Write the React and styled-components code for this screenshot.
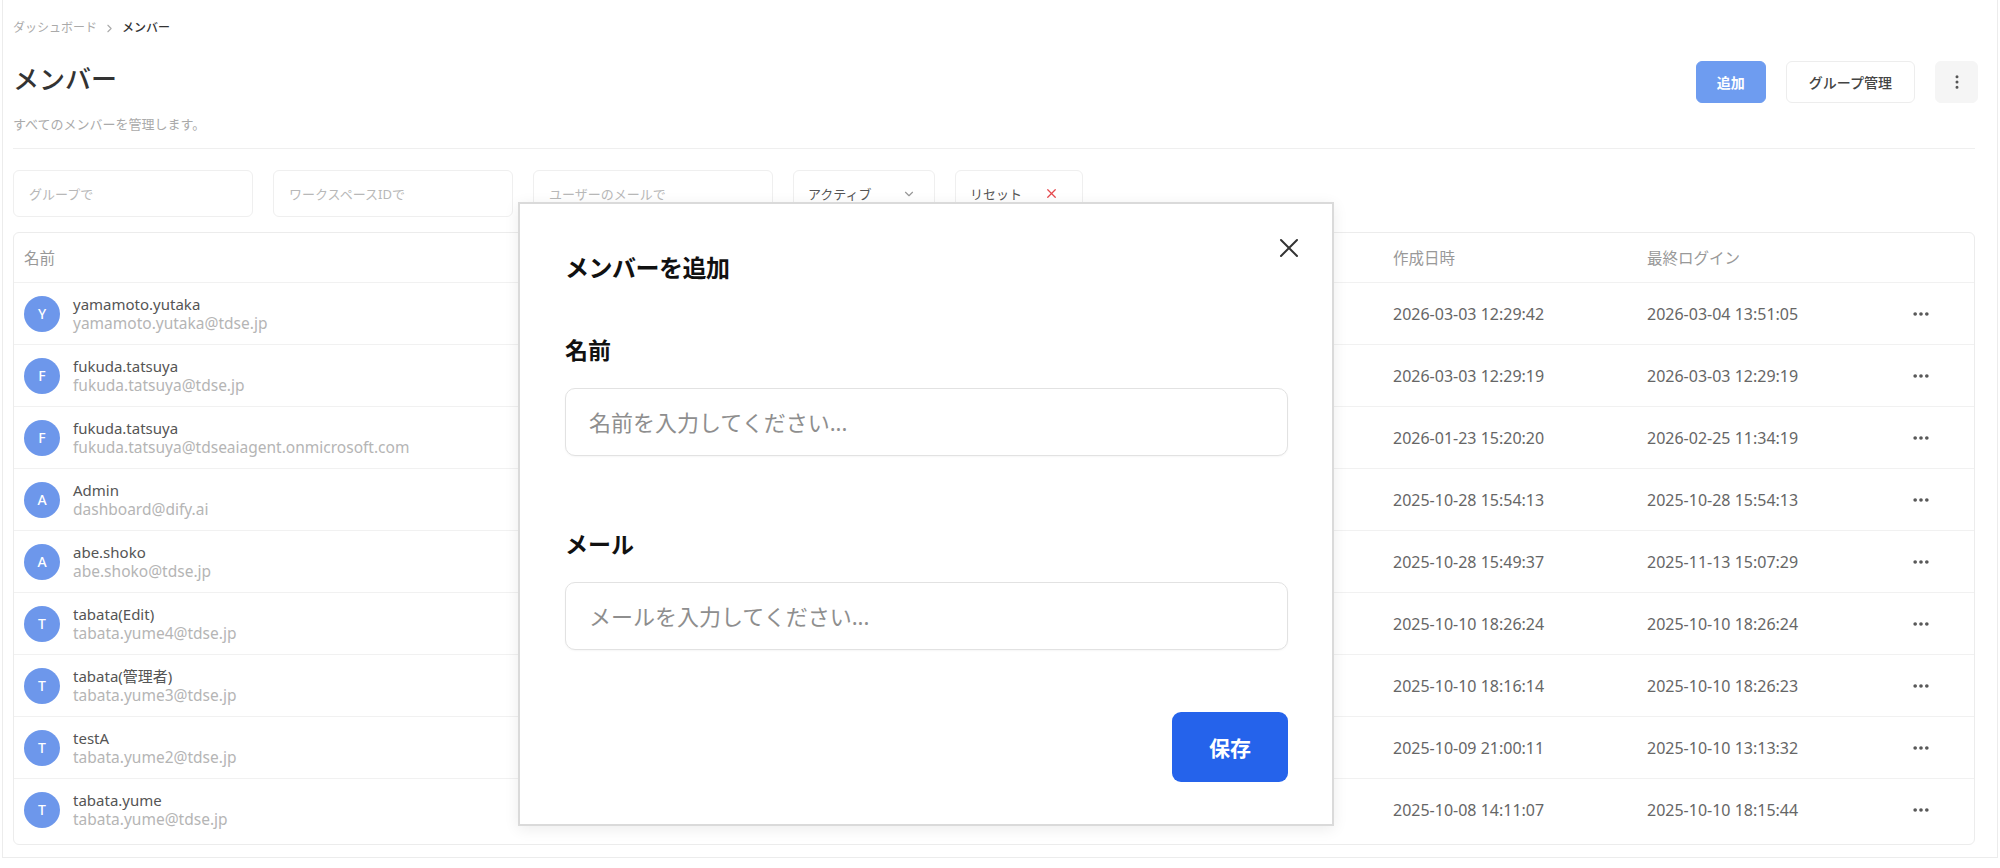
import React from 'react';
import styled, { createGlobalStyle } from 'styled-components';
import { ChevronDown, ChevronRight, X, Ellipsis, EllipsisVertical } from 'lucide-react';

const GlobalStyle = createGlobalStyle`
  body {
    margin: 0;
    background: #fff;
    font-family: "Noto Sans", "Noto Sans CJK JP", sans-serif;
    color: #333;
  }
  * { box-sizing: border-box; }
`;

const Page = styled.div`
  position: relative;
  height: 858px;
  margin: 0 2px;
  border: 1px solid #ececec;
  border-top: none;
  padding: 18px 22px 0 10px;
`;

const Breadcrumb = styled.div`
  display: flex;
  align-items: center;
  gap: 6px;
  font-size: 12px;
  line-height: 20px;
  color: #aaa;
`;

const Current = styled.span`
  color: #333;
  font-weight: 500;
`;

const HeaderRow = styled.div`
  margin-top: 23px;
  display: flex;
  justify-content: space-between;
  align-items: flex-start;
`;

const Title = styled.h1`
  margin: 0;
  font-size: 26px;
  line-height: 36px;
  font-weight: 500;
  color: #333;
`;

const Subtitle = styled.p`
  margin: 17px 0 0;
  font-size: 13px;
  line-height: 20px;
  color: #aaa;
`;

const Actions = styled.div`
  display: flex;
  align-items: center;
  gap: 20px;
  margin-right: -3px;
`;

const Button = styled.button`
  height: 42px;
  padding: 0 ${p => (p.$icon ? '0' : p.$primary ? '20px' : '22px')};
  width: ${p => (p.$icon ? '43px' : 'auto')};
  border-radius: 6px;
  font-family: inherit;
  font-size: 14px;
  font-weight: ${p => (p.$primary ? 700 : 500)};
  color: ${p => (p.$primary ? '#fff' : '#444')};
  background: ${p => (p.$primary ? '#6e9cf0' : p.$icon ? '#f5f5f5' : '#fff')};
  border: 1px solid ${p => (p.$primary ? '#6e9cf0' : p.$icon ? '#f5f5f5' : '#ededed')};
  display: flex;
  align-items: center;
  justify-content: center;
`;

const Divider = styled.hr`
  margin: 14px 0 0;
  border: none;
  border-top: 1px solid #efefef;
`;

const Filters = styled.div`
  margin-top: 21px;
  display: flex;
  gap: 20px;
`;

const FilterInput = styled.input`
  width: 240px;
  height: 47px;
  border: 1px solid #efefef;
  border-radius: 6px;
  padding: 0 15px;
  font-family: inherit;
  font-size: 13px;
  background: #fff;
  &::placeholder { color: #b8b8b8; }
`;

const FilterButton = styled.button`
  width: ${p => p.$width}px;
  height: 47px;
  border: 1px solid #efefef;
  border-radius: 6px;
  padding: 0 18px 0 14px;
  background: #fff;
  font-family: inherit;
  font-size: 13px;
  color: #555;
  display: flex;
  align-items: center;
  justify-content: ${p => (p.$spread ? 'space-between' : 'flex-start')};
  gap: 22px;
`;

const Table = styled.div`
  margin-top: 15px;
  padding-bottom: 4px;
  border: 1px solid #ececec;
  border-radius: 6px;
  background: #fff;
`;

const Row = styled.div`
  display: grid;
  grid-template-columns: 1fr 254px 254px 83px;
  align-items: center;
  height: ${p => (p.$header ? 49 : 62)}px;
  border-top: ${p => (p.$header ? 'none' : '1px solid #f1f1f1')};
`;

const HeadCell = styled.div`
  padding-left: 10px;
  font-size: 15.5px;
  color: #999;
`;

const Cell = styled.div`
  padding-left: ${p => (p.$action ? 20 : 10)}px;
  font-size: 16px;
  color: #666;
  display: flex;
  align-items: center;
`;

const Avatar = styled.div`
  width: 36px;
  height: 36px;
  border-radius: 50%;
  background: #6d97eb;
  color: #fff;
  font-size: 14px;
  font-weight: 500;
  display: flex;
  align-items: center;
  justify-content: center;
  margin-right: 13px;
`;

const NameBlock = styled.div`
  display: flex;
  flex-direction: column;
  line-height: 19px;
`;

const Name = styled.span`
  font-size: 15px;
  color: #555;
`;

const Email = styled.span`
  font-size: 15.5px;
  color: #b5b5b5;
`;

const Modal = styled.div`
  position: absolute;
  left: 515px;
  top: 202px;
  width: 816px;
  padding: 48px 44px 42px 45px;
  background: #fff;
  border: 2px solid #dadada;
  box-shadow: 0 3px 14px rgba(0, 0, 0, 0.08);
`;

const CloseButton = styled.button`
  position: absolute;
  top: 34px;
  right: 33px;
  padding: 0;
  border: none;
  background: none;
  width: 20px;
  height: 20px;
  color: #333;
`;

const ModalTitle = styled.h2`
  margin: 0 0 51px;
  font-size: 24px;
  line-height: 32px;
  font-weight: 700;
  letter-spacing: -0.5px;
  color: #111;
`;

const Field = styled.div`
  & + & { margin-top: 73px; }
`;

const Label = styled.label`
  display: block;
  margin-bottom: 23px;
  font-size: 23px;
  line-height: 30px;
  font-weight: 700;
  color: #111;
`;

const TextInput = styled.input`
  width: 100%;
  height: 68px;
  border: 1px solid #e2e2e2;
  border-radius: 10px;
  padding: 0 23px;
  font-family: inherit;
  font-size: 22px;
  box-shadow: 0 1px 2px rgba(0, 0, 0, 0.04);
  &::placeholder { color: #8e8e8e; }
`;

const ModalFooter = styled.div`
  margin-top: 62px;
  display: flex;
  justify-content: flex-end;
`;

const SaveButton = styled.button`
  width: 116px;
  height: 70px;
  border: none;
  border-radius: 9px;
  background: #2563eb;
  color: #fff;
  font-family: inherit;
  font-size: 21px;
  font-weight: 700;
`;

const members = [
  ['yamamoto.yutaka', 'yamamoto.yutaka@tdse.jp', '2026-03-03 12:29:42', '2026-03-04 13:51:05'],
  ['fukuda.tatsuya', 'fukuda.tatsuya@tdse.jp', '2026-03-03 12:29:19', '2026-03-03 12:29:19'],
  ['fukuda.tatsuya', 'fukuda.tatsuya@tdseaiagent.onmicrosoft.com', '2026-01-23 15:20:20', '2026-02-25 11:34:19'],
  ['Admin', 'dashboard@dify.ai', '2025-10-28 15:54:13', '2025-10-28 15:54:13'],
  ['abe.shoko', 'abe.shoko@tdse.jp', '2025-10-28 15:49:37', '2025-11-13 15:07:29'],
  ['tabata(Edit)', 'tabata.yume4@tdse.jp', '2025-10-10 18:26:24', '2025-10-10 18:26:24'],
  ['tabata(管理者)', 'tabata.yume3@tdse.jp', '2025-10-10 18:16:14', '2025-10-10 18:26:23'],
  ['testA', 'tabata.yume2@tdse.jp', '2025-10-09 21:00:11', '2025-10-10 13:13:32'],
  ['tabata.yume', 'tabata.yume@tdse.jp', '2025-10-08 14:11:07', '2025-10-10 18:15:44'],
];

const App = () => (
  <>
    <GlobalStyle />
    <Page>
      <Breadcrumb>
        <span>ダッシュボード</span>
        <ChevronRight size={13} color="#aaa" />
        <Current>メンバー</Current>
      </Breadcrumb>

      <HeaderRow>
        <div>
          <Title>メンバー</Title>
          <Subtitle>すべてのメンバーを管理します。</Subtitle>
        </div>
        <Actions>
          <Button $primary>追加</Button>
          <Button>グループ管理</Button>
          <Button $icon>
            <EllipsisVertical size={18} color="#555" />
          </Button>
        </Actions>
      </HeaderRow>

      <Divider />

      <Filters>
        <FilterInput placeholder="グループで" />
        <FilterInput placeholder="ワークスペースIDで" />
        <FilterInput placeholder="ユーザーのメールで" />
        <FilterButton $width={142} $spread>
          アクティブ
          <ChevronDown size={14} color="#999" />
        </FilterButton>
        <FilterButton $width={128}>
          リセット
          <X size={15} color="#e5484d" />
        </FilterButton>
      </Filters>

      <Table>
        <Row $header>
          <HeadCell>名前</HeadCell>
          <HeadCell>作成日時</HeadCell>
          <HeadCell>最終ログイン</HeadCell>
          <HeadCell />
        </Row>
        {members.map(([name, email, created, login], i) => (
          <Row key={i}>
            <Cell>
              <Avatar>{name[0].toUpperCase()}</Avatar>
              <NameBlock>
                <Name>{name}</Name>
                <Email>{email}</Email>
              </NameBlock>
            </Cell>
            <Cell>{created}</Cell>
            <Cell>{login}</Cell>
            <Cell $action>
              <Ellipsis size={20} color="#555" strokeWidth={2.4} />
            </Cell>
          </Row>
        ))}
      </Table>

      <Modal>
        <CloseButton aria-label="close">
          <svg width="20" height="20" viewBox="0 0 20 20" fill="none" stroke="currentColor" strokeWidth="2" strokeLinecap="round">
            <path d="M2 2 18 18M18 2 2 18" />
          </svg>
        </CloseButton>
        <ModalTitle>メンバーを追加</ModalTitle>
        <Field>
          <Label>名前</Label>
          <TextInput placeholder="名前を入力してください..." />
        </Field>
        <Field>
          <Label>メール</Label>
          <TextInput placeholder="メールを入力してください..." />
        </Field>
        <ModalFooter>
          <SaveButton>保存</SaveButton>
        </ModalFooter>
      </Modal>
    </Page>
  </>
);

export default App;
